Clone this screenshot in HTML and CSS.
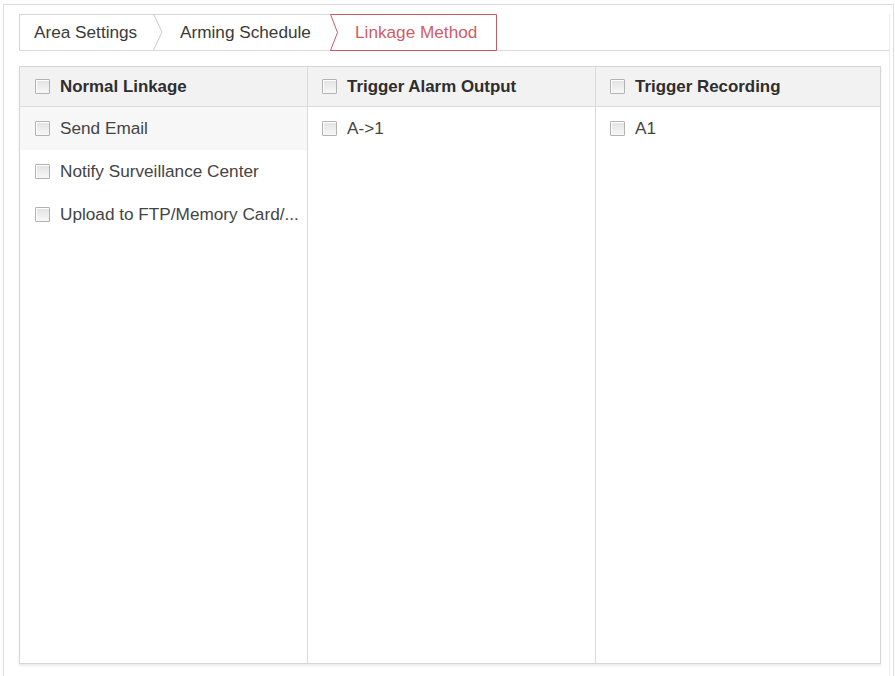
FILE: index.html
```html
<!DOCTYPE html>
<html lang="en">
<head>
    <meta charset="UTF-8">
    <meta name="viewport" content="width=device-width, initial-scale=1.0">
    <title>Linkage Method</title>
    <link rel="stylesheet" href="styles.css">
</head>
<body>

    <div class="frame">
        <div class="panel">
            <div class="tabs">
                <div class="tab tab-first">Area Settings</div>
                <div class="sep">
                    <svg width="10" height="36" viewBox="0 0 10 36"><polyline points="0.5,0 9,18 0.5,36" fill="none" stroke="#c8c8c8" stroke-width="1"/></svg>
                </div>
                <div class="tab tab-second">Arming Schedule</div>
                <div class="tab tab-active">
                    <svg class="tab-shape" width="167" height="37" viewBox="0 0 167 37"><polyline points="0.5,0.5 166.5,0.5 166.5,36.5 0.5,36.5 7.5,18.5 0.5,0.5" fill="#fff" stroke="#c25a64" stroke-width="1"/></svg>
                    <span class="tab-label">Linkage Method</span>
                </div>
            </div>

            <div class="linkage">
                <div class="col">
                    <div class="col-head"><input type="checkbox"> Normal Linkage</div>
                    <div class="item item-hover"><input type="checkbox"> Send Email</div>
                    <div class="item"><input type="checkbox"> Notify Surveillance Center</div>
                    <div class="item"><input type="checkbox"> Upload to FTP/Memory Card/...</div>
                </div>
                <div class="col">
                    <div class="col-head"><input type="checkbox"> Trigger Alarm Output</div>
                    <div class="item"><input type="checkbox"> A-&gt;1</div>
                </div>
                <div class="col">
                    <div class="col-head"><input type="checkbox"> Trigger Recording</div>
                    <div class="item"><input type="checkbox"> A1</div>
                </div>
            </div>
        </div>
    </div>

</body>
</html>
```

FILE: styles.css
```css
html, body {
    margin: 0;
    padding: 0;
    height: 100%;
    overflow: hidden;
}
body {
    font-family: "Liberation Sans", Arial, sans-serif;
    font-size: 17.2px;
    color: #444;
    background: #fff;
}
.frame {
    box-sizing: border-box;
    margin: 4px 1px 0 3px;
    height: 672px;
    border: 1px solid #dcdcdc;
    border-bottom: none;
    padding: 9px 3px 0 15px;
}
.panel {
    height: 100%;
    border-right: 1px solid #ececec;
}
.tabs {
    display: flex;
    align-items: flex-start;
    height: 36px;
    border-bottom: 1px solid #dadada;
}
.tab {
    box-sizing: border-box;
    height: 36px;
    line-height: 35px;
    border-top: 1px solid #d6d6d6;
    white-space: nowrap;
    color: #3a3a3a;
}
.tab-first {
    width: 134px;
    border-left: 1px solid #d6d6d6;
    padding-left: 14px;
}
.sep {
    height: 36px;
    width: 10px;
    box-sizing: border-box;
    border-top: 1px solid #d6d6d6;
}
.sep svg {
    display: block;
    margin-top: -1px;
}
.tab-second {
    width: 167px;
    padding-left: 17px;
}
.tab-active {
    position: relative;
    width: 167px;
    height: 37px;
    border-top: none;
    line-height: 37px;
    padding-left: 25px;
    color: #cf5c66;
}
.tab-shape {
    position: absolute;
    left: 0;
    top: 0;
}
.tab-label {
    position: relative;
}
.linkage {
    display: grid;
    grid-template-columns: 287px 288px 1fr;
    width: 862px;
    height: 598px;
    box-sizing: border-box;
    margin-top: 15px;
    border: 1px solid #d6d6d6;
    box-shadow: 0 2px 2px rgba(0, 0, 0, 0.08);
}
.col + .col {
    border-left: 1px solid #d9d9d9;
}
.col-head {
    display: flex;
    align-items: center;
    height: 39px;
    padding-left: 15px;
    background: #f2f2f2;
    border-bottom: 1px solid #dcdcdc;
    font-size: 16.9px;
    font-weight: bold;
    color: #2e2e2e;
}
.col + .col .col-head {
    padding-left: 14px;
}
.item {
    display: flex;
    align-items: center;
    height: 43px;
    padding-left: 15px;
}
.col + .col .item {
    padding-left: 14px;
}
.item-hover {
    background: #f7f7f7;
}
input[type="checkbox"] {
    -webkit-appearance: none;
    appearance: none;
    width: 15px;
    height: 15px;
    margin: 0 10px 0 0;
    border: 1px solid #b2b2b2;
    border-radius: 1px;
    background: linear-gradient(#e2e2e2, #f7f7f7);
    box-shadow: inset 1px 1px 0 #fff;
    flex: none;
}
```
